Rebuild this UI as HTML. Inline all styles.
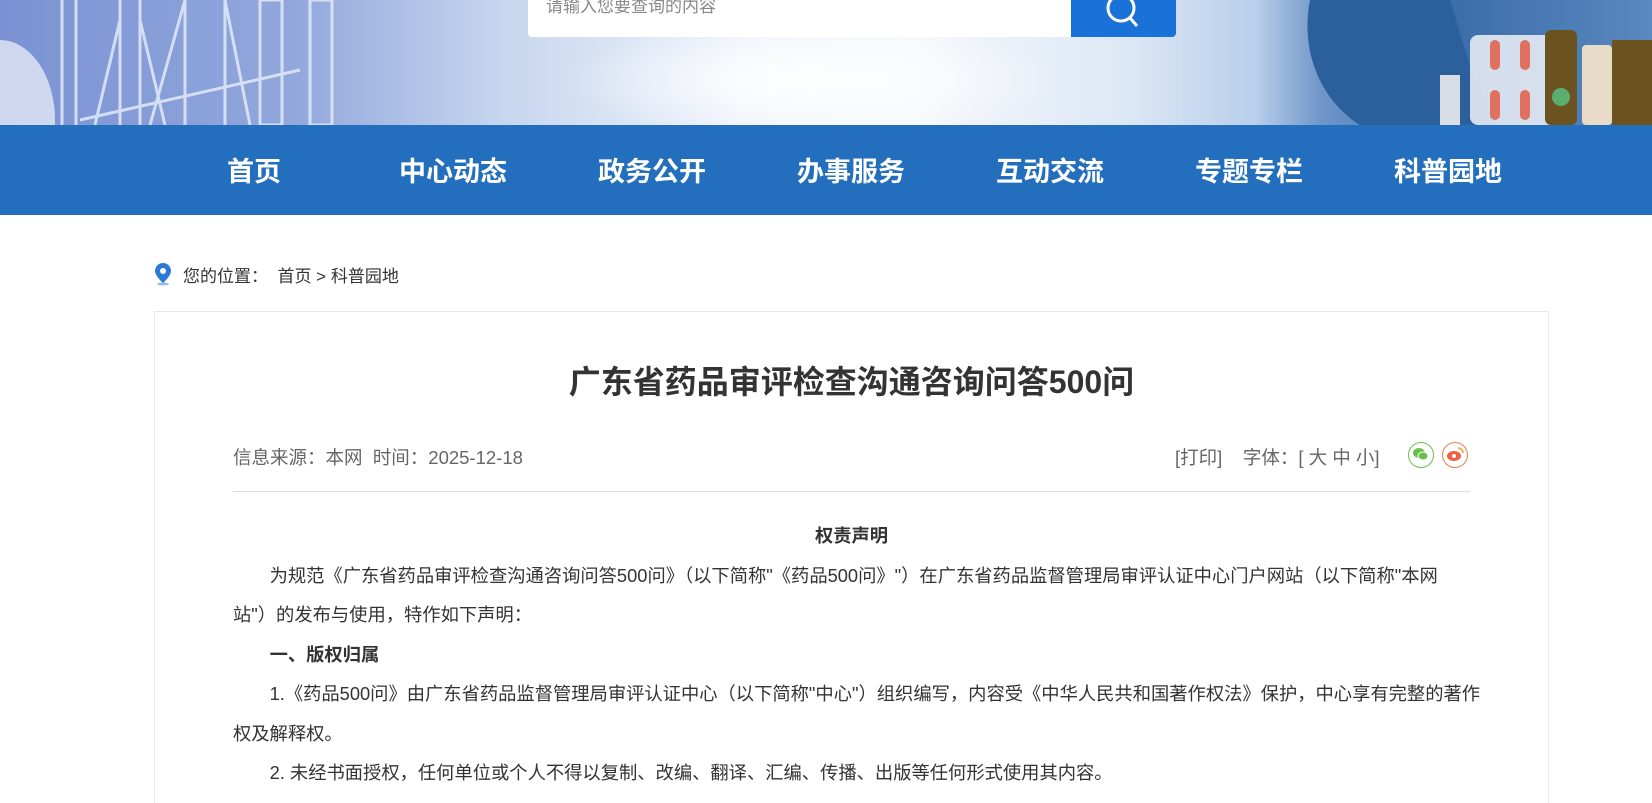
<!DOCTYPE html>
<html><head><meta charset="utf-8"><style>
*{margin:0;padding:0;box-sizing:border-box}
html,body{width:1652px;height:803px;overflow:hidden}
body{position:relative;background:#fff;font-family:"Liberation Sans","Noto Sans CJK SC",sans-serif;color:#333}
.hdr{position:absolute;left:0;top:0;width:1652px;height:125px;background:linear-gradient(90deg,#7a92d3 0%,#92a8dc 18%,#c6d5ee 30%,#eef3fa 45%,#f6f8fb 55%,#dde8f5 68%,#b9cfea 76%,#6f95c8 80%,#3b6ea8 88%,#5a88c0 100%);overflow:hidden}
.hdr .glow{position:absolute;left:560px;top:20px;width:500px;height:120px;background:radial-gradient(ellipse,#fff 0%,rgba(255,255,255,0) 70%)}
.search{position:absolute;left:528px;top:0;width:543px;height:37px;background:#fff;border-radius:0 0 0 4px;font-size:17px;color:#888;padding:0 18px;line-height:14px}
.btn{position:absolute;left:1071px;top:0;width:105px;height:37px;background:#1a72d9;border-radius:0 0 4px 0}
.nav{position:absolute;left:0;top:125px;width:1652px;height:90px;background:#246fbd}
.nav span{position:absolute;top:2px;line-height:90px;color:#fff;font-size:27px;font-weight:bold;transform:translateX(-50%);white-space:nowrap}
.bc{position:absolute;left:183px;top:262px;font-size:17px;color:#333}
.card{position:absolute;left:154px;top:311px;width:1395px;height:492px;border:1px solid #e8e8e8;border-bottom:none}
h1{position:absolute;left:154px;width:1395px;top:357px;text-align:center;font-size:32px;font-weight:bold;color:#333}
.meta{position:absolute;top:444px;font-size:18.5px;color:#666}
.hr{position:absolute;left:233px;top:491px;width:1237px;height:1px;background:#ddd}
.ct{position:absolute;left:233px;top:516px;width:1260px;height:287px;overflow:hidden;font-size:18.3px;line-height:39.5px;color:#333;white-space:nowrap}
.ct p{text-indent:2em}
.ico{position:absolute;top:442px;width:26px;height:26px;border-radius:50%;border:1.5px solid}
</style></head><body>
<div class="hdr"><div class="glow"></div>
<svg style="position:absolute;left:0;top:0" width="340" height="125"><g stroke="#e8eefa" stroke-width="3" fill="none" opacity=".8"><path d="M120 0V125M140 0V125M185 0V125M225 0V125"/><path d="M120 20 L95 125M140 20 L165 125M185 0 L150 125M225 0 L250 125"/><path d="M80 120 L300 70"/><rect x="260" y="0" width="22" height="125"/><rect x="310" y="0" width="22" height="125"/><path d="M62 0V125M76 0V125"/></g><ellipse cx="0" cy="120" rx="55" ry="80" fill="#e4e9f5" opacity=".8"/></svg>
<svg style="position:absolute;left:1300px;top:0" width="352" height="125"><path d="M10 0 C0 50 20 100 60 125 L200 125 C170 80 160 30 150 0Z" fill="#2c609c"/><rect x="170" y="35" width="95" height="90" rx="8" fill="#e6eaf3" opacity=".9"/><rect x="190" y="40" width="10" height="30" rx="5" fill="#e07060"/><rect x="220" y="40" width="10" height="30" rx="5" fill="#e07060"/><rect x="190" y="90" width="10" height="30" rx="5" fill="#e07060"/><rect x="220" y="90" width="10" height="30" rx="5" fill="#e07060"/><rect x="245" y="30" width="32" height="95" rx="6" fill="#6b5320"/><circle cx="261" cy="97" r="9" fill="#5aae70"/><rect x="282" y="45" width="30" height="80" rx="4" fill="#e8dcc8"/><rect x="312" y="40" width="40" height="85" fill="#6b5320"/><rect x="140" y="75" width="20" height="50" fill="#d8dde6"/></svg>
<div class="search">请输入您要查询的内容</div><div class="btn"><svg width="105" height="37"><circle cx="50" cy="8" r="13" fill="none" stroke="#fff" stroke-width="3"/><path d="M59 18 L66 26" stroke="#fff" stroke-width="3"/></svg></div>
</div>
<div class="nav"><span style="left:254px">首页</span><span style="left:453px">中心动态</span><span style="left:652px">政务公开</span><span style="left:851px">办事服务</span><span style="left:1050px">互动交流</span><span style="left:1249px">专题专栏</span><span style="left:1448px">科普园地</span></div>
<svg style="position:absolute;left:154px;top:262px" width="18" height="24"><path d="M9 1 C4 1 1 5 1 9 C1 14 9 21 9 21 C9 21 17 14 17 9 C17 5 14 1 9 1Z" fill="#2a7ad6"/><circle cx="9" cy="9" r="3" fill="#fff"/><ellipse cx="9" cy="22" rx="6" ry="1.5" fill="#2a7ad6" opacity=".5"/></svg>
<div class="bc">您的位置：&nbsp;&nbsp;首页 &gt; 科普园地</div>
<div class="card"></div>
<h1>广东省药品审评检查沟通咨询问答500问</h1>
<div class="meta" style="left:233px">信息来源：本网&nbsp;&nbsp;时间：2025-12-18</div>
<div class="meta" style="left:1175px">[打印]&nbsp;&nbsp;&nbsp;&nbsp;字体：[ 大 中 小]</div>
<div class="ico" style="left:1408px;border-color:#6cbf4a"><svg width="23" height="23"><ellipse cx="10" cy="10" rx="6" ry="5" fill="#6cbf4a"/><ellipse cx="14" cy="13" rx="5" ry="4" fill="#6cbf4a" stroke="#fff"/></svg></div>
<div class="ico" style="left:1442px;border-color:#f07b4a"><svg width="23" height="23"><ellipse cx="11" cy="13" rx="7" ry="5" fill="#f06040"/><circle cx="11" cy="13" r="2" fill="#fff"/><path d="M15 5 A5 5 0 0 1 20 10" stroke="#f5a030" fill="none" stroke-width="1.5"/></svg></div>
<div class="hr"></div>
<div class="ct">
<div style="text-align:center;font-weight:bold;width:1237px">权责声明</div>
<p>为规范《广东省药品审评检查沟通咨询问答500问》（以下简称"《药品500问》"）在广东省药品监督管理局审评认证中心门户网站（以下简称"本网<br>站"）的发布与使用，特作如下声明：</p>
<p style="font-weight:bold">一、版权归属</p>
<p>1.《药品500问》由广东省药品监督管理局审评认证中心（以下简称"中心"）组织编写，内容受《中华人民共和国著作权法》保护，中心享有完整的著作<br>权及解释权。</p>
<p>2. 未经书面授权，任何单位或个人不得以复制、改编、翻译、汇编、传播、出版等任何形式使用其内容。</p>
</div>
</body></html>
